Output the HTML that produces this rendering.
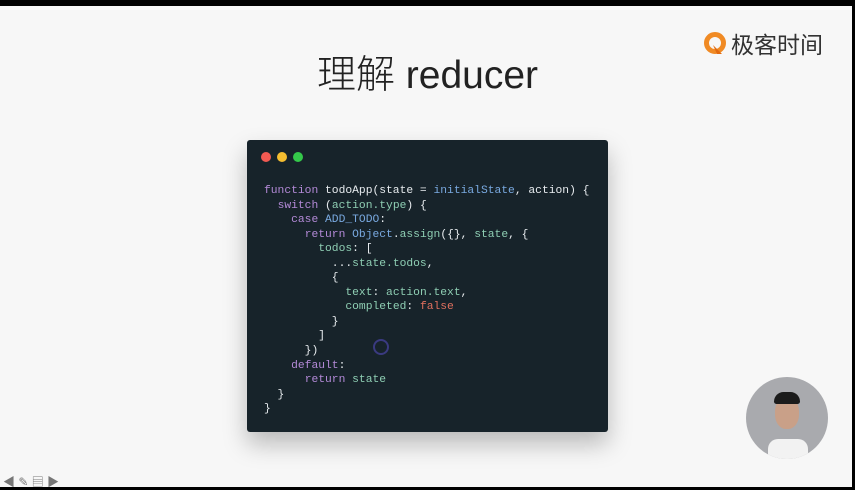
<!DOCTYPE html>
<html><head><meta charset="utf-8"><style>
body{margin:0;width:855px;height:490px;overflow:hidden;background:#f7f7f7;position:relative;font-family:"Liberation Sans","Noto Sans CJK SC",sans-serif}
.top{position:absolute;left:0;top:0;width:855px;height:6px;background:#000}
.bot{position:absolute;left:0;top:487px;width:855px;height:3px;background:#000}
.rt{position:absolute;left:852px;top:0;width:3px;height:490px;background:#000}
h1{position:absolute;left:0;width:855px;top:51px;margin:0;text-align:center;font-weight:300;font-size:39px;color:#222;line-height:50px;font-family:"Liberation Sans","Noto Sans CJK SC",sans-serif}
.card{position:absolute;left:247px;top:140px;width:361px;height:292px;background:#17232a;border-radius:3px;box-shadow:0 12px 24px rgba(0,0,0,.25)}
.dot{position:absolute;top:12px;width:10px;height:10px;border-radius:50%}
pre{position:absolute;left:17px;top:44px;margin:0;font-family:"Liberation Mono","DejaVu Sans Mono",monospace;font-size:11.3px;line-height:14.55px;color:#e8ecef}
.k{color:#b48ad8}.b{color:#79a9e0}.g{color:#8fcfb4}.r{color:#e0705e}
.logo{position:absolute;left:704px;top:26px;font-size:23px;color:#333;letter-spacing:0px}
.av{position:absolute;left:746px;top:377px;width:82px;height:82px;border-radius:50%;background:#a9aaae;overflow:hidden}
</style></head><body>
<div class="top"></div><div class="rt"></div>
<div class="logo"><svg width="24" height="26" viewBox="0 0 24 26" style="vertical-align:-5px"><circle cx="11" cy="11" r="8.5" fill="none" stroke="#f08a24" stroke-width="5"/><path d="M9 13 L13 22 L18 22 Z" fill="#e26a10"/></svg><span style="margin-left:3px">极客时间</span></div>
<h1>理解 reducer</h1>
<div class="card">
<div class="dot" style="left:14px;background:#f25a52"></div>
<div class="dot" style="left:30px;background:#f5bd30"></div>
<div class="dot" style="left:46px;background:#34c84a"></div>
<pre><span class="k">function</span> todoApp(state = <span class="b">initialState</span>, action) {
  <span class="k">switch</span> (<span class="g">action.type</span>) {
    <span class="k">case</span> <span class="b">ADD_TODO</span>:
      <span class="k">return</span> <span class="b">Object</span>.<span class="g">assign</span>({}, <span class="g">state</span>, {
        <span class="g">todos</span>: [
          ...<span class="g">state.todos</span>,
          {
            <span class="g">text</span>: <span class="g">action.text</span>,
            <span class="g">completed</span>: <span class="r">false</span>
          }
        ]
      })
    <span class="k">default</span>:
      <span class="k">return</span> <span class="g">state</span>
  }
}</pre>
<div style="position:absolute;left:126px;top:199px;width:12px;height:12px;border-radius:50%;border:2px solid #3a3a80"></div>
</div>
<div class="av">
<div style="position:absolute;left:22px;top:62px;width:40px;height:30px;background:#f2f2f2;border-radius:10px 10px 0 0"></div>
<div style="position:absolute;left:29px;top:20px;width:24px;height:32px;background:#c9a088;border-radius:45%"></div>
<div style="position:absolute;left:28px;top:15px;width:26px;height:12px;background:#1b1b1b;border-radius:12px 12px 3px 3px"></div>
</div>
<div style="position:absolute;left:3px;top:473px;font-size:12px;color:#777">◀ ✎ ▤ ▶</div>
<div class="bot"></div>
</body></html>
